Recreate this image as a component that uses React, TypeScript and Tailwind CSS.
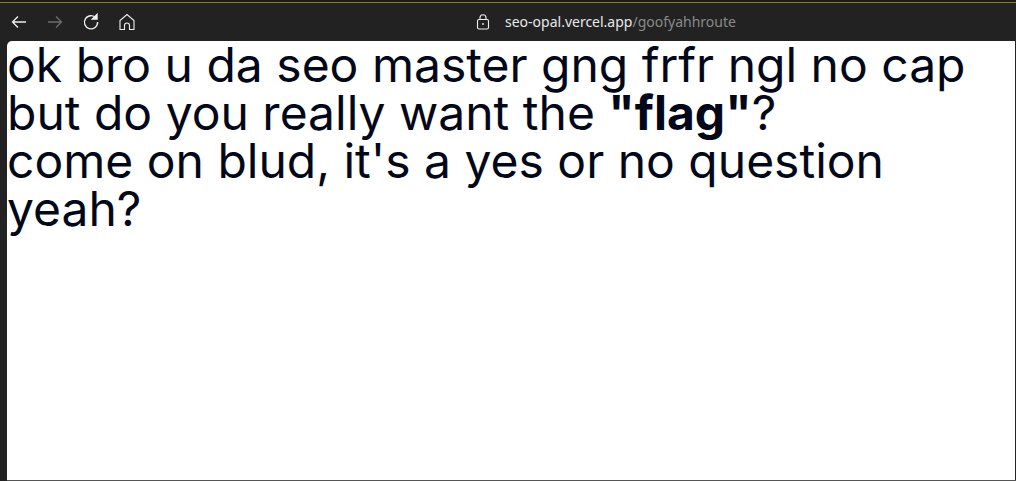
export default function App() {
  return (
    <div className="flex h-[481px] w-[1016px] flex-col overflow-hidden bg-[#222222]">
      <div className="h-[2px] bg-[#1c1c14]" />
      <div className="h-[1px] bg-[#84841f]" />
      <div className="relative flex h-[38px] items-center">
        <div className="flex items-center">
          <svg className="ml-[10px]" width="18" height="18" viewBox="0 0 18 18" fill="none" stroke="#f0f0f0" strokeWidth="1.3">
            <path d="M16 9H2.5M8 3.5 2.5 9 8 14.5" />
          </svg>
          <svg className="ml-[18px]" width="18" height="18" viewBox="0 0 18 18" fill="none" stroke="#6e6e6e" strokeWidth="1.3">
            <path d="M2 9h13.5M10 3.5 15.5 9 10 14.5" />
          </svg>
          <svg className="ml-[18px]" width="18" height="18" viewBox="0 0 18 18" fill="none" stroke="#f0f0f0" strokeWidth="1.4">
            <path d="M14.2 5.2A6.6 6.6 0 1 0 15.6 9" />
            <path d="M15 1.5v4.6h-4.6z" fill="#f0f0f0" />
          </svg>
          <svg className="ml-[18px]" width="18" height="18" viewBox="0 0 18 18" fill="none" stroke="#f0f0f0" strokeWidth="1.1">
            <path d="M2 16.5V7.5L9 1.5l7 6v9h-4.5v-4a2.5 2.5 0 0 0-5 0v4z" />
          </svg>
        </div>
        <div className="absolute left-[476px] top-0 flex h-[38px] items-center">
          <svg width="14" height="16" viewBox="0 0 14 16" fill="none" stroke="#f0f0f0" strokeWidth="1.1">
            <rect x="1.5" y="5.5" width="11" height="9.5" rx="1.5" />
            <path d="M4 5.5V3.8a3 3 0 0 1 6 0v1.7" />
            <circle cx="7" cy="10" r="0.9" fill="#f0f0f0" stroke="none" />
          </svg>
          <span className="ml-[15px] font-['Noto_Sans',sans-serif] text-[14px] leading-[20px] whitespace-nowrap text-[#e8e8e8]">
            seo-opal.vercel.app<span className="text-[#8a8a8a]">/goofyahhroute</span>
          </span>
        </div>
      </div>
      <div className="ml-[7px] mr-[1px] h-[439px] rounded-tl-[5px] bg-white pr-[2px] font-['Inter',sans-serif] text-[48px] leading-[48px] text-[#020817]">
        <p>ok bro u da seo master gng frfr ngl no cap</p>
        <p>
          but do you really want the <b className="font-bold">"flag"</b>?
        </p>
        <p>come on blud, it's a yes or no question</p>
        <p>yeah?</p>
      </div>
      <div className="ml-[7px] h-[1px] bg-[#555555]" />
    </div>
  );
}
